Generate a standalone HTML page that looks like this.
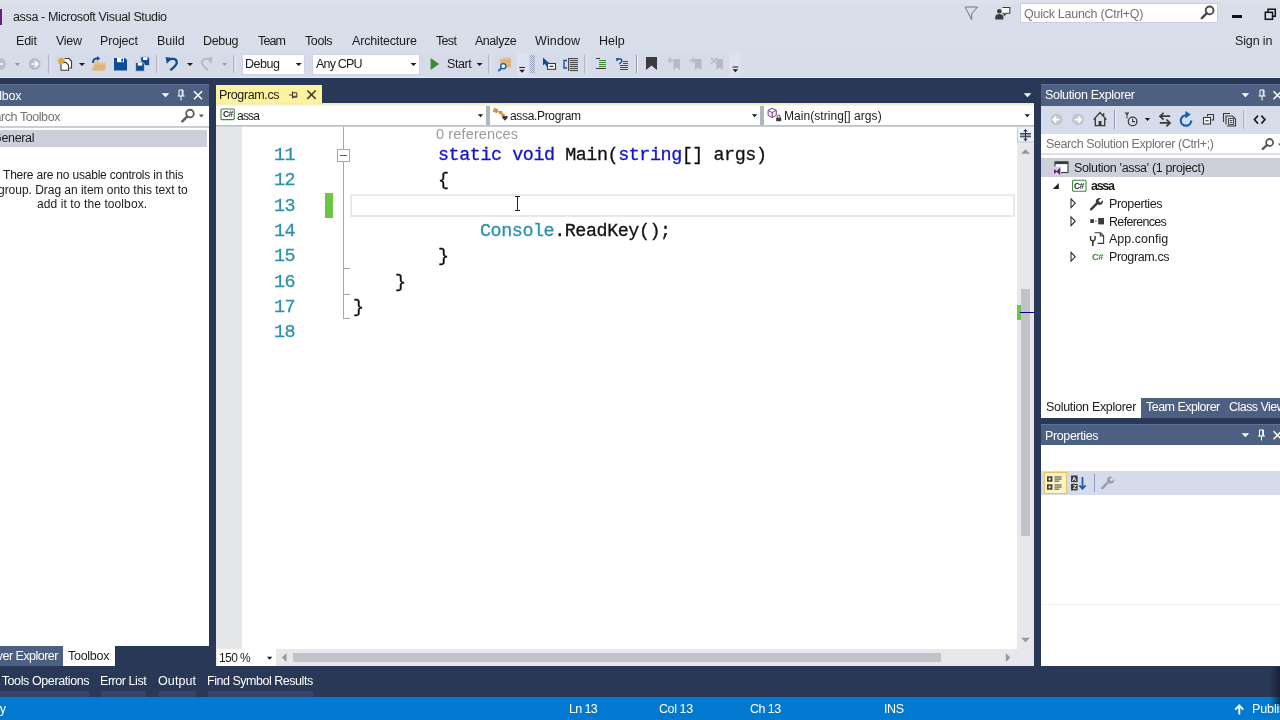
<!DOCTYPE html>
<html lang="en">
<head>
<meta charset="utf-8">
<title>assa - Microsoft Visual Studio</title>
<style>
*{box-sizing:border-box;margin:0;padding:0}
html,body{width:1280px;height:720px;overflow:hidden}
body{position:relative;background:#dbe0ec;font-family:"Liberation Sans",sans-serif;font-size:12px;color:#1b1b1b}
.a{position:absolute}
.t{position:absolute;white-space:nowrap;will-change:transform}
svg{position:absolute;overflow:visible}
</style>
</head>
<body>
<!-- title / menu / toolbar -->
<div class="a" style="left:0px;top:0px;width:1280px;height:78px;background:linear-gradient(#dde2ec 0,#d9dfea 6px,#d7dde9 100%);"></div>
<div class="a" style="left:0px;top:53px;width:517px;height:23px;background:#d5dbe8;"></div>
<div class="a" style="left:517px;top:53px;width:11px;height:23px;background:#dde2ec;"></div>
<div class="a" style="left:528px;top:53px;width:201px;height:23px;background:#d5dbe8;"></div>
<div class="a" style="left:729px;top:53px;width:11px;height:23px;background:#dde2ec;"></div>
<div class="a" style="left:0px;top:76.5px;width:1280px;height:1.5px;background:#e3e7f0;"></div>
<div class="a" style="left:0px;top:9px;width:2px;height:16px;background:#68217a;"></div>
<div class="t" id="t0" style="top:9.17px;font-size:12.5px;line-height:16px;color:#1b1b1b;letter-spacing:-0.358px;left:12.90px;">assa - Microsoft Visual Studio</div>
<div class="t" id="t1" style="top:32.67px;font-size:12.5px;line-height:16px;color:#1b1b1b;letter-spacing:-0.212px;left:16.40px;">Edit</div>
<div class="t" id="t2" style="top:32.67px;font-size:12.5px;line-height:16px;color:#1b1b1b;letter-spacing:-0.294px;left:55.90px;">View</div>
<div class="t" id="t3" style="top:32.67px;font-size:12.5px;line-height:16px;color:#1b1b1b;letter-spacing:-0.172px;left:100.40px;">Project</div>
<div class="t" id="t4" style="top:32.67px;font-size:12.5px;line-height:16px;color:#1b1b1b;letter-spacing:-0.020px;left:156.90px;">Build</div>
<div class="t" id="t5" style="top:32.67px;font-size:12.5px;line-height:16px;color:#1b1b1b;letter-spacing:-0.329px;left:203.40px;">Debug</div>
<div class="t" id="t6" style="top:32.67px;font-size:12.5px;line-height:16px;color:#1b1b1b;letter-spacing:-0.845px;left:258.40px;">Team</div>
<div class="t" id="t7" style="top:32.67px;font-size:12.5px;line-height:16px;color:#1b1b1b;letter-spacing:-0.399px;left:305.40px;">Tools</div>
<div class="t" id="t8" style="top:32.67px;font-size:12.5px;line-height:16px;color:#1b1b1b;letter-spacing:-0.167px;left:351.90px;">Architecture</div>
<div class="t" id="t9" style="top:32.67px;font-size:12.5px;line-height:16px;color:#1b1b1b;letter-spacing:-0.684px;left:436.40px;">Test</div>
<div class="t" id="t10" style="top:32.67px;font-size:12.5px;line-height:16px;color:#1b1b1b;letter-spacing:-0.467px;left:475.40px;">Analyze</div>
<div class="t" id="t11" style="top:32.67px;font-size:12.5px;line-height:16px;color:#1b1b1b;letter-spacing:0.121px;left:535.40px;">Window</div>
<div class="t" id="t12" style="top:32.67px;font-size:12.5px;line-height:16px;color:#1b1b1b;letter-spacing:-0.005px;left:598.90px;">Help</div>
<div class="t" id="t13" style="top:33.17px;font-size:12.5px;line-height:16px;color:#1b1b1b;letter-spacing:-0.146px;left:1235.40px;">Sign in</div>
<div class="a" style="left:1020px;top:3px;width:198px;height:20px;background:#fff;border:1px solid #c9cede"></div>
<div class="t" id="t14" style="top:5.67px;font-size:12.5px;line-height:16px;color:#737373;letter-spacing:-0.262px;left:1024.40px;">Quick Launch (Ctrl+Q)</div>
<div class="a" style="left:242px;top:54px;width:63px;height:21px;background:#fff;border:1px solid #cfd4e2"></div>
<div class="t" id="t15" style="top:55.57px;font-size:12.5px;line-height:16px;color:#1b1b1b;letter-spacing:-0.449px;left:245.40px;">Debug</div>
<div class="a" style="left:312px;top:54px;width:108px;height:21px;background:#fff;border:1px solid #cfd4e2"></div>
<div class="t" id="t16" style="top:55.57px;font-size:12.5px;line-height:16px;color:#1b1b1b;letter-spacing:-0.802px;left:315.80px;">Any CPU</div>
<div class="t" id="t17" style="top:55.57px;font-size:12.5px;line-height:16px;color:#1b1b1b;letter-spacing:-0.402px;left:447.20px;">Start</div>
<!-- dark frame -->
<div class="a" style="left:0px;top:78px;width:1280px;height:619px;background:#293856;"></div>
<!-- toolbox panel -->
<div class="a" style="left:0px;top:84px;width:209px;height:1px;background:#5f7194;"></div>
<div class="a" style="left:0px;top:85px;width:209px;height:21px;background:#4d6082;"></div>
<div class="t" id="t18" style="top:88.17px;font-size:12.5px;line-height:16px;color:#fff;letter-spacing:-0.271px;right:1258.67px;">Toolbox</div>
<div class="a" style="left:0px;top:106px;width:209px;height:540px;background:#fff;"></div>
<div class="a" style="left:0px;top:126px;width:209px;height:1.5px;background:#c9cdd8;"></div>
<div class="t" id="t19" style="top:108.67px;font-size:12.5px;line-height:16px;color:#737373;letter-spacing:-0.425px;right:1220.33px;">Search Toolbox</div>
<div class="a" style="left:0px;top:130px;width:207px;height:17px;background:#cdd0db;"></div>
<div class="t" id="t20" style="top:130.17px;font-size:12.5px;line-height:16px;color:#1b1b1b;letter-spacing:-0.325px;right:1245.73px;">General</div>
<div class="t" id="t21" style="top:167.04px;font-size:12px;line-height:16px;color:#1b1b1b;letter-spacing:-0.201px;left:3.40px;">There are no usable controls in this</div>
<div class="t" id="t22" style="top:181.84px;font-size:12px;line-height:16px;color:#1b1b1b;letter-spacing:-0.029px;left:-1.60px;">group. Drag an item onto this text to</div>
<div class="t" id="t23" style="top:196.34px;font-size:12px;line-height:16px;color:#1b1b1b;letter-spacing:0.096px;left:37.40px;">add it to the toolbox.</div>
<div class="a" style="left:0px;top:646px;width:63px;height:20px;background:#4d6082;"></div>
<div class="t" id="t24" style="top:648.17px;font-size:12.5px;line-height:16px;color:#fff;letter-spacing:-0.529px;right:1222.43px;">Server Explorer</div>
<div class="a" style="left:63px;top:646px;width:52px;height:20px;background:#fff;"></div>
<div class="t" id="t25" style="top:648.17px;font-size:12.5px;line-height:16px;color:#1b1b1b;letter-spacing:-0.271px;left:68.40px;">Toolbox</div>
<!-- document well -->
<div class="a" style="left:216px;top:84.5px;width:105.5px;height:19px;background:#fff29d;"></div>
<div class="t" id="t26" style="top:86.67px;font-size:12.5px;line-height:16px;color:#1b1b1b;letter-spacing:-0.371px;left:219.40px;">Program.cs</div>
<div class="a" style="left:216px;top:103px;width:818px;height:3px;background:linear-gradient(#f0e7ae,#fbf8e4);"></div>
<div class="a" style="left:216px;top:105.5px;width:818px;height:20px;background:#fff;"></div>
<div class="a" style="left:486.3px;top:105.5px;width:3.7px;height:20px;background:#b0b5c2;"></div>
<div class="a" style="left:760.3px;top:105.5px;width:3.7px;height:20px;background:#b0b5c2;"></div>
<div class="a" style="left:216px;top:124.7px;width:818px;height:2px;background:linear-gradient(#b6bac6,#d3d6df);"></div>
<div class="t" id="t27" style="top:107.94px;font-size:12px;line-height:16px;color:#1b1b1b;letter-spacing:-0.790px;left:237.40px;">assa</div>
<div class="t" id="t28" style="top:107.94px;font-size:12px;line-height:16px;color:#1b1b1b;letter-spacing:-0.333px;left:509.90px;">assa.Program</div>
<div class="t" id="t29" style="top:107.94px;font-size:12px;line-height:16px;color:#1b1b1b;letter-spacing:0.053px;left:783.90px;">Main(string[] args)</div>
<div class="a" style="left:216px;top:127px;width:818px;height:522px;background:#fff;"></div>
<div class="a" style="left:216px;top:127px;width:26px;height:522px;background:#e6e7e8;"></div>
<div class="a" style="left:350px;top:194px;width:665px;height:23px;background:#fff;border:2px solid #e9e9e9"></div>
<div class="a" style="left:325px;top:193px;width:8px;height:25px;background:#6cc644;"></div>
<div class="a" style="left:343px;top:127px;width:1px;height:192px;background:#a8a8a8;"></div>
<div class="a" style="left:343px;top:268px;width:7px;height:1px;background:#a8a8a8;"></div>
<div class="a" style="left:343px;top:293.5px;width:7px;height:1px;background:#a8a8a8;"></div>
<div class="a" style="left:343px;top:318px;width:7px;height:1px;background:#a8a8a8;"></div>
<div class="a" style="left:337px;top:149px;width:13px;height:13px;background:#fff;border:1px solid #a8a8a8"></div>
<div class="a" style="left:340px;top:155px;width:7px;height:1px;background:#555;"></div>
<div class="t" id="t30" style="top:124.98px;font-size:14.5px;line-height:19px;color:#9a9a9a;letter-spacing:0.133px;left:436.40px;">0 references</div>
<div class="t" style="left:437.50px;top:144.10px;font:18.4px/24px 'Liberation Mono',monospace;letter-spacing:-0.442px;-webkit-text-stroke:0.3px"><span style="color:#1212d2">static</span><span style="color:#111"> </span><span style="color:#1212d2">void</span><span style="color:#111"> Main(</span><span style="color:#1212d2">string</span><span style="color:#111">[] args)</span></div>
<div class="t" style="left:437.50px;top:169.43px;font:18.4px/24px 'Liberation Mono',monospace;letter-spacing:-0.442px;-webkit-text-stroke:0.3px"><span style="color:#111">{</span></div>
<div class="t" style="left:479.90px;top:220.09px;font:18.4px/24px 'Liberation Mono',monospace;letter-spacing:-0.442px;-webkit-text-stroke:0.3px"><span style="color:#2b91af">Console</span><span style="color:#111">.ReadKey();</span></div>
<div class="t" style="left:437.50px;top:245.42px;font:18.4px/24px 'Liberation Mono',monospace;letter-spacing:-0.442px;-webkit-text-stroke:0.3px"><span style="color:#111">}</span></div>
<div class="t" style="left:395.10px;top:270.75px;font:18.4px/24px 'Liberation Mono',monospace;letter-spacing:-0.442px;-webkit-text-stroke:0.3px"><span style="color:#111">}</span></div>
<div class="t" style="left:352.70px;top:296.08px;font:18.4px/24px 'Liberation Mono',monospace;letter-spacing:-0.442px;-webkit-text-stroke:0.3px"><span style="color:#111">}</span></div>
<div class="t" style="left:273.5px;top:144.10px;font:18.4px/24px 'Liberation Mono',monospace;letter-spacing:-0.5px;color:#2b91af;-webkit-text-stroke:0.3px #2b91af">11</div>
<div class="t" style="left:273.5px;top:169.43px;font:18.4px/24px 'Liberation Mono',monospace;letter-spacing:-0.5px;color:#2b91af;-webkit-text-stroke:0.3px #2b91af">12</div>
<div class="t" style="left:273.5px;top:194.76px;font:18.4px/24px 'Liberation Mono',monospace;letter-spacing:-0.5px;color:#2b91af;-webkit-text-stroke:0.3px #2b91af">13</div>
<div class="t" style="left:273.5px;top:220.09px;font:18.4px/24px 'Liberation Mono',monospace;letter-spacing:-0.5px;color:#2b91af;-webkit-text-stroke:0.3px #2b91af">14</div>
<div class="t" style="left:273.5px;top:245.42px;font:18.4px/24px 'Liberation Mono',monospace;letter-spacing:-0.5px;color:#2b91af;-webkit-text-stroke:0.3px #2b91af">15</div>
<div class="t" style="left:273.5px;top:270.75px;font:18.4px/24px 'Liberation Mono',monospace;letter-spacing:-0.5px;color:#2b91af;-webkit-text-stroke:0.3px #2b91af">16</div>
<div class="t" style="left:273.5px;top:296.08px;font:18.4px/24px 'Liberation Mono',monospace;letter-spacing:-0.5px;color:#2b91af;-webkit-text-stroke:0.3px #2b91af">17</div>
<div class="t" style="left:273.5px;top:321.41px;font:18.4px/24px 'Liberation Mono',monospace;letter-spacing:-0.5px;color:#2b91af;-webkit-text-stroke:0.3px #2b91af">18</div>
<div class="a" style="left:517px;top:197px;width:1px;height:13px;background:#222;"></div>
<div class="a" style="left:515px;top:196px;width:5px;height:1px;background:#222;"></div>
<div class="a" style="left:515px;top:210px;width:5px;height:1px;background:#222;"></div>
<div class="a" style="left:1017px;top:127px;width:17px;height:522px;background:#e8e8ec;"></div>
<div class="a" style="left:1021px;top:289px;width:9px;height:247px;background:#c2c3c9;"></div>
<div class="a" style="left:1017px;top:305px;width:4px;height:15px;background:#6cc644;"></div>
<div class="a" style="left:1020px;top:312px;width:14px;height:1px;background:#00008b;"></div>
<div class="a" style="left:216px;top:649px;width:818px;height:17px;background:#e8e8ec;"></div>
<div class="a" style="left:293px;top:653px;width:648px;height:9px;background:#c2c3c9;"></div>
<div class="a" style="left:217px;top:649px;width:59px;height:17px;background:#fff;"></div>
<div class="t" id="t31" style="top:650.04px;font-size:12px;line-height:16px;color:#1b1b1b;letter-spacing:-0.567px;left:219.40px;">150 %</div>
<!-- solution explorer -->
<div class="a" style="left:1041px;top:84px;width:239px;height:1px;background:#5f7194;"></div>
<div class="a" style="left:1041px;top:85px;width:239px;height:21px;background:#4d6082;"></div>
<div class="t" id="t32" style="top:87.37px;font-size:12.5px;line-height:16px;color:#fff;letter-spacing:-0.324px;left:1045.40px;">Solution Explorer</div>
<div class="a" style="left:1041px;top:106px;width:239px;height:28px;background:#d6dce9;"></div>
<div class="a" style="left:1041px;top:134px;width:239px;height:19px;background:#fff;"></div>
<div class="a" style="left:1041px;top:153px;width:239px;height:2px;background:#dce0ea;"></div>
<div class="t" id="t33" style="top:135.67px;font-size:12.5px;line-height:16px;color:#737373;letter-spacing:-0.387px;left:1046.10px;">Search Solution Explorer (Ctrl+;)</div>
<div class="a" style="left:1041px;top:155px;width:239px;height:243px;background:#fff;"></div>
<div class="a" style="left:1041px;top:158px;width:239px;height:19px;background:#cdd0db;"></div>
<div class="t" id="t34" style="top:160.27px;font-size:12.5px;line-height:16px;color:#1b1b1b;letter-spacing:-0.336px;left:1074.10px;">Solution 'assa' (1 project)</div>
<div class="t" id="t35" style="top:177.67px;font-size:12.5px;line-height:16px;color:#1b1b1b;letter-spacing:-1.278px;font-weight:bold;left:1091.40px;">assa</div>
<div class="t" id="t36" style="top:195.67px;font-size:12.5px;line-height:16px;color:#1b1b1b;letter-spacing:-0.378px;left:1109.40px;">Properties</div>
<div class="t" id="t37" style="top:213.67px;font-size:12.5px;line-height:16px;color:#1b1b1b;letter-spacing:-0.673px;left:1109.40px;">References</div>
<div class="t" id="t38" style="top:231.17px;font-size:12.5px;line-height:16px;color:#1b1b1b;letter-spacing:0.012px;left:1109.40px;">App.config</div>
<div class="t" id="t39" style="top:249.17px;font-size:12.5px;line-height:16px;color:#1b1b1b;letter-spacing:-0.371px;left:1109.40px;">Program.cs</div>
<div class="a" style="left:1041px;top:398px;width:100px;height:20px;background:#fff;"></div>
<div class="a" style="left:1141px;top:398px;width:139px;height:20px;background:#4d6082;"></div>
<div class="t" id="t40" style="top:399.17px;font-size:12.5px;line-height:16px;color:#1b1b1b;letter-spacing:-0.306px;left:1046.10px;">Solution Explorer</div>
<div class="t" id="t41" style="top:399.17px;font-size:12.5px;line-height:16px;color:#fff;letter-spacing:-0.530px;left:1146.40px;">Team Explorer</div>
<div class="t" id="t42" style="top:399.17px;font-size:12.5px;line-height:16px;color:#fff;letter-spacing:-0.540px;left:1229.40px;">Class View</div>
<!-- properties -->
<div class="a" style="left:1041px;top:424px;width:239px;height:1px;background:#5f7194;"></div>
<div class="a" style="left:1041px;top:425px;width:239px;height:21px;background:#4d6082;"></div>
<div class="t" id="t43" style="top:428.17px;font-size:12.5px;line-height:16px;color:#fff;letter-spacing:-0.378px;left:1045.40px;">Properties</div>
<div class="a" style="left:1041px;top:445px;width:239px;height:221px;background:#fff;"></div>
<div class="a" style="left:1041px;top:471px;width:239px;height:24px;background:#d5dbea;"></div>
<div class="a" style="left:1044px;top:472px;width:23px;height:22px;background:#fdf4bf;border:1px solid #e5c365"></div>
<div class="a" style="left:1094px;top:474px;width:1px;height:18px;background:#8e9bbc;"></div>
<div class="a" style="left:1041px;top:604px;width:239px;height:1px;background:#f1f1f1;"></div>
<!-- bottom tabs and status bar -->
<div class="a" style="left:0px;top:691px;width:89px;height:6px;background:#35456a;"></div>
<div class="a" style="left:101px;top:691px;width:45px;height:6px;background:#35456a;"></div>
<div class="a" style="left:159px;top:691px;width:37px;height:6px;background:#35456a;"></div>
<div class="a" style="left:208px;top:691px;width:104.5px;height:6px;background:#35456a;"></div>
<div class="t" id="t44" style="top:672.67px;font-size:12.5px;line-height:16px;color:#fff;letter-spacing:-0.393px;right:1190.79px;">Data Tools Operations</div>
<div class="t" id="t45" style="top:672.67px;font-size:12.5px;line-height:16px;color:#fff;letter-spacing:-0.450px;left:100.40px;">Error List</div>
<div class="t" id="t46" style="top:672.67px;font-size:12.5px;line-height:16px;color:#fff;letter-spacing:0.110px;left:158.40px;">Output</div>
<div class="t" id="t47" style="top:672.67px;font-size:12.5px;line-height:16px;color:#fff;letter-spacing:-0.470px;left:207.40px;">Find Symbol Results</div>
<div class="a" style="left:0px;top:697px;width:1280px;height:23px;background:#0279d0;"></div>
<div class="a" style="left:1270px;top:667px;width:10px;height:38px;background:linear-gradient(90deg,rgba(22,26,40,0),rgba(22,26,40,.75));"></div>
<div class="t" id="t48" style="top:701.17px;font-size:12.5px;line-height:16px;color:#fff;letter-spacing:-0.288px;right:1274.19px;">Ready</div>
<div class="t" id="t49" style="top:701.17px;font-size:12.5px;line-height:16px;color:#fff;letter-spacing:-0.616px;left:568.90px;">Ln 13</div>
<div class="t" id="t50" style="top:701.17px;font-size:12.5px;line-height:16px;color:#fff;letter-spacing:-0.408px;left:659.40px;">Col 13</div>
<div class="t" id="t51" style="top:701.17px;font-size:12.5px;line-height:16px;color:#fff;letter-spacing:-0.533px;left:750.40px;">Ch 13</div>
<div class="t" id="t52" style="top:701.17px;font-size:12.5px;line-height:16px;color:#fff;letter-spacing:-0.380px;left:884.40px;">INS</div>
<div class="t" id="t53" style="top:701.17px;font-size:12.5px;line-height:16px;color:#fff;letter-spacing:-0.115px;left:1252.40px;">Publish</div>
<!-- icons -->
<svg width="1280" height="720" viewBox="0 0 1280 720" style="left:0;top:0"><circle cx="0" cy="64" r="6" fill="#b9bdc8"/>
<path d="M3.2 64 H-2.8 M-0.2 61 L-3.2 64 L-0.2 67" fill="none" stroke="#fff" stroke-width="1.6"/>
<polygon points="15.0,63.0 20.0,63.0 17.5,66.0" fill="#9096a3"/>
<circle cx="34.6" cy="64" r="6" fill="#b9bdc8"/>
<path d="M31.400000000000002 64 H37.4 M34.800000000000004 61 L37.800000000000004 64 L34.800000000000004 67" fill="none" stroke="#fff" stroke-width="1.6"/>
<rect x="48.5" y="55" width="1" height="18" fill="#8f98ae"/><rect x="49.5" y="55" width="1" height="18" fill="#eef1f7"/>
<path d="M64.5 58.5 h4.5 l2.5 2.5 v7 h-2" fill="#fff" stroke="#3b3b3b" stroke-width="1.1"/>
<path d="M61 62.5 h5 l2.5 2.5 v5.3 h-7.5 z" fill="#fff" stroke="#3b3b3b" stroke-width="1.1"/>
<path d="M61.3 56.5 l0.9 2.3 2.3-1 -1 2.3 2.3 0.9 -2.3 0.9 1 2.3 -2.3-1 -0.9 2.3 -0.9-2.3 -2.3 1 1-2.3 -2.3-0.9 2.3-0.9 -1-2.3 2.3 1z" fill="#eaa23a"/>
<polygon points="79.0,63.0 85.0,63.0 82,66.0" fill="#1b1b1b"/>
<path d="M94 61 h5 l1 1.5 h6 v8 h-12z" fill="#e6c48a"/><path d="M91.5 70.5 l3-6 h11.5 l-3 6z" fill="#dcb67a"/>
<path d="M92.8 63 c0-3.2 2-4.6 5-4.6" fill="none" stroke="#0e4c96" stroke-width="1.7"/><polygon points="97,56 100.3,58.4 97,60.8" fill="#0e4c96"/>
<path d="M114 58 h11 l2 2 v10.5 h-13z" fill="#0e4c96"/><rect x="117" y="58" width="7" height="4.2" fill="#fff"/><rect x="121.3" y="58.6" width="1.7" height="3" fill="#0e4c96"/>
<path d="M140.8 56.8 h7.2 l1.6 1.6 v7.2 h-8.8z" fill="#0e4c96" stroke="#d5dbe8" stroke-width="0.8"/><rect x="143" y="57.2" width="4.4" height="2.8" fill="#fff"/>
<path d="M135.6 62.4 h7.2 l1.6 1.6 v7.2 h-8.8z" fill="#0e4c96" stroke="#d5dbe8" stroke-width="0.8"/><rect x="137.8" y="62.8" width="4.4" height="2.8" fill="#fff"/>
<rect x="156.5" y="55" width="1" height="18" fill="#8f98ae"/><rect x="157.5" y="55" width="1" height="18" fill="#eef1f7"/>
<path d="M168.5 60.2 C171 58 176.8 58.2 176.8 62.5 C176.8 65.5 173.5 67.5 170.3 70.2" fill="none" stroke="#0e4c96" stroke-width="2.3"/><polygon points="165.6,57 172.2,58 166.8,63.8" fill="#0e4c96"/>
<polygon points="187.0,63.0 193.0,63.0 190,66.0" fill="#1b1b1b"/>
<path d="M209.8 60.2 C207.3 58 201.8 58.2 201.8 62.5 C201.8 65.5 205 67.5 208 70.2" fill="none" stroke="#b6bac6" stroke-width="2"/><polygon points="212.6,57 206.2,58 211.5,63.8" fill="#b6bac6"/>
<polygon points="222.1,63.0 227.1,63.0 224.6,66.0" fill="#9aa0ae"/>
<rect x="233.5" y="55" width="1" height="18" fill="#8f98ae"/><rect x="234.5" y="55" width="1" height="18" fill="#eef1f7"/>
<polygon points="295.7,63.0 301.7,63.0 298.7,66.0" fill="#1b1b1b"/>
<polygon points="410.5,63.0 416.5,63.0 413.5,66.0" fill="#1b1b1b"/>
<polygon points="430.6,58 439.2,64 430.6,70" fill="#388a34"/>
<polygon points="476.6,63.0 482.6,63.0 479.6,66.0" fill="#1b1b1b"/>
<rect x="488.5" y="55" width="1" height="18" fill="#8f98ae"/><rect x="489.5" y="55" width="1" height="18" fill="#eef1f7"/>
<path d="M503 57.5 h8 v3 h-8z" fill="#e6c48a"/><rect x="500" y="59.3" width="11" height="8.2" fill="#dcb67a"/>
<circle cx="503.3" cy="66.2" r="2.6" fill="#eef3fb" stroke="#1b5fb0" stroke-width="1.4"/><line x1="501.4" y1="68.2" x2="498.2" y2="71" stroke="#1b5fb0" stroke-width="1.8"/>
<rect x="519.3" y="67" width="5.6" height="1" fill="#1b1b1b"/>
<polygon points="519.3000000000001,69.8 524.9,69.8 522.1,72.8" fill="#1b1b1b"/>
<defs><pattern id="grip" width="2" height="2" patternUnits="userSpaceOnUse"><rect width="1" height="1" fill="#98a1b8"/><rect x="1" y="1" width="1" height="1" fill="#98a1b8"/></pattern></defs><rect x="530" y="55" width="5" height="18" fill="url(#grip)"/>
<rect x="547.5" y="63.5" width="8" height="5.8" fill="#fff" stroke="#3b3b3b" stroke-width="1.1"/><rect x="549.5" y="65.7" width="4" height="1.3" fill="#3b3b3b"/>
<polygon points="543,57.5 543,65.5 545,63.8 546.4,66.6 547.8,65.9 546.5,63.2 549,63" fill="#0e4c96"/>
<path d="M567 60.5 h-3 v7.5 h3" fill="none" stroke="#0e4c96" stroke-width="1.3"/>
<rect x="568" y="58.0" width="10" height="1.1" fill="#4a4a4a"/>
<rect x="570" y="60.0" width="8" height="1.1" fill="#4a4a4a"/>
<rect x="570" y="62.0" width="8" height="1.1" fill="#4a4a4a"/>
<rect x="570" y="64.0" width="8" height="1.1" fill="#4a4a4a"/>
<rect x="570" y="66.0" width="8" height="1.1" fill="#4a4a4a"/>
<rect x="570" y="68.0" width="8" height="1.1" fill="#4a4a4a"/>
<rect x="570" y="70.0" width="8" height="1.1" fill="#4a4a4a"/>
<rect x="568" y="58" width="1.2" height="13" fill="#4a4a4a"/>
<rect x="584.5" y="55" width="1" height="18" fill="#8f98ae"/><rect x="585.5" y="55" width="1" height="18" fill="#eef1f7"/>
<rect x="599" y="60" width="7" height="1" fill="#388a34"/>
<rect x="599" y="62" width="7" height="1" fill="#388a34"/>
<rect x="599" y="64" width="7" height="1" fill="#388a34"/>
<rect x="599" y="66" width="7" height="1" fill="#388a34"/>
<rect x="596" y="58" width="4" height="1" fill="#3b3b3b"/><rect x="596" y="68" width="10" height="1" fill="#3b3b3b"/>
<path d="M618 59.6 C619.5 58.4 621.8 58.8 621.8 60.8 C621.8 62.2 620.4 63 619.4 64" fill="none" stroke="#0e4c96" stroke-width="1.4"/><polygon points="616,58 619.6,58.4 616.6,61.6" fill="#0e4c96"/>
<rect x="623" y="61" width="5" height="1" fill="#4a4a4a"/>
<rect x="623" y="63" width="5" height="1" fill="#4a4a4a"/>
<rect x="620" y="65" width="8" height="1" fill="#4a4a4a"/>
<rect x="620" y="67" width="8" height="1" fill="#4a4a4a"/>
<rect x="620" y="69" width="8" height="1" fill="#4a4a4a"/>
<rect x="636.0" y="55" width="1" height="18" fill="#8f98ae"/><rect x="637.0" y="55" width="1" height="18" fill="#eef1f7"/>
<polygon points="646,57 657,57 657,70 651.5,65.6 646,70" fill="#3b3b3b"/>
<polygon points="673.5,59 680,59 680,70.3 676.75,67.6 673.5,70.3" fill="#b6bac6"/>
<polygon points="695.0,59 701.5,59 701.5,70.3 698.25,67.6 695.0,70.3" fill="#b6bac6"/>
<polygon points="716.5,59 723,59 723,70.3 719.75,67.6 716.5,70.3" fill="#b6bac6"/>
<path d="M674 60.5 h-5.5 m2.6-2.6 l-2.6 2.6 2.6 2.6" fill="none" stroke="#b6bac6" stroke-width="1.4"/>
<path d="M689.5 60.5 h5.5 m-2.6-2.6 l2.6 2.6 -2.6 2.6" fill="none" stroke="#b6bac6" stroke-width="1.4"/>
<path d="M711 57.8 l6 6 m0-6 l-6 6" fill="none" stroke="#b6bac6" stroke-width="1.4"/>
<rect x="732.6" y="66.5" width="5.6" height="1" fill="#1b1b1b"/>
<polygon points="732.6,69.3 738.1999999999999,69.3 735.4,72.3" fill="#1b1b1b"/>
<path d="M965 7 H977.5 L971.6 14 V19.6 Z" fill="none" stroke="#6f7482" stroke-width="1" stroke-linejoin="round"/>
<circle cx="999.3" cy="11.3" r="2.3" fill="#3b3b3b"/><path d="M995.3 19.5 v-2.2 c0-2.4 1.6-3.4 4-3.4 s4 1 4 3.4 v2.2z" fill="#3b3b3b"/>
<path d="M1002.5 7.5 h7.3 v5.8 h-3.6 l-2 2 v-2 h-1.7" fill="#fff" stroke="#3b3b3b" stroke-width="1.1"/>
<circle cx="1209.6" cy="10.4" r="3.9" fill="none" stroke="#4a4a4a" stroke-width="1.9"/><line x1="1206.9" y1="13.1" x2="1201.8" y2="18.2" stroke="#4a4a4a" stroke-width="2.5" stroke-linecap="round"/>
<rect x="1232" y="15" width="10" height="3" fill="#111"/>
<path d="M1268 12 V9.3 H1275.3 V16.3 H1272.8" fill="none" stroke="#111" stroke-width="1.5"/><rect x="1265.3" y="12.3" width="7.2" height="7" fill="none" stroke="#111" stroke-width="1.5"/>
<polygon points="161.75,93.3 169.25,93.3 165.5,97.3" fill="#fff"/>
<path d="M179 96.0 V90.0 H183 V96.0 M182.2 90.0 V96.0 M177.5 96.0 H184.5 M181 96.0 V100.5" fill="none" stroke="#fff" stroke-width="1"/>
<path d="M194 91.3 L202 99.3 M202 91.3 L194 99.3" stroke="#fff" stroke-width="1.5" fill="none"/>
<polygon points="1241.65,93.3 1249.15,93.3 1245.4,97.3" fill="#fff"/>
<path d="M1260 96.0 V90.0 H1264 V96.0 M1263.2 90.0 V96.0 M1258.5 96.0 H1265.5 M1262 96.0 V100.5" fill="none" stroke="#fff" stroke-width="1"/>
<path d="M1273.5 91.3 L1281.5 99.3 M1281.5 91.3 L1273.5 99.3" stroke="#fff" stroke-width="1.5" fill="none"/>
<polygon points="1241.65,433.3 1249.15,433.3 1245.4,437.3" fill="#fff"/>
<path d="M1259.5 436.0 V430.0 H1263.5 V436.0 M1262.7 430.0 V436.0 M1258.0 436.0 H1265.0 M1261.5 436.0 V440.5" fill="none" stroke="#fff" stroke-width="1"/>
<path d="M1273.5 431.3 L1281.5 439.3 M1281.5 431.3 L1273.5 439.3" stroke="#fff" stroke-width="1.5" fill="none"/>
<polygon points="1023.75,93.3 1031.25,93.3 1027.5,97.3" fill="#fff"/>
<circle cx="190.0" cy="113.6" r="3.8" fill="none" stroke="#5e5e5e" stroke-width="1.9"/><line x1="187.3" y1="116.3" x2="182.3" y2="121.4" stroke="#5e5e5e" stroke-width="2.5" stroke-linecap="round"/>
<polygon points="198.8,114.5 203.8,114.5 201.3,117.5" fill="#555"/>
<path d="M289 95 H292.5 M292.5 91.5 V98.5 M292.5 92.8 H296.8 V97.2 H292.5 M292.5 96.3 H296.8" fill="none" stroke="#3a3a3a" stroke-width="1"/>
<path d="M307.3 90.5 L315.7 98.9 M315.7 90.5 L307.3 98.9" stroke="#3a3a3a" stroke-width="1.5" fill="none"/>
<polygon points="477.8,114.2 483.2,114.2 480.5,117.2" fill="#1b1b1b"/>
<polygon points="751.9,114.2 757.3000000000001,114.2 754.6,117.2" fill="#1b1b1b"/>
<polygon points="1024.6,114.2 1030.0,114.2 1027.3,117.2" fill="#1b1b1b"/>
<rect x="221" y="109" width="13.2" height="10.6" rx="1" fill="#fff" stroke="#388a34" stroke-width="1.1"/>
<path d="M496.5 111 L500 112.5 L503 114.5" stroke="#c58a3b" stroke-width="1.2" fill="none"/><rect x="493.5" y="108.5" width="4.6" height="4.2" fill="#d9953d" transform="rotate(20 496 110)"/><rect x="499" y="111" width="3.4" height="3.2" fill="#d9953d"/><rect x="501.5" y="113.6" width="3.2" height="3" fill="#d9953d"/>
<path d="M502.3 116 h5.2 v2 l-2.6 2.8 -2.6-2.8z" fill="#3b3b3b"/>
<path d="M772.2 108.2 l4.1 2.1 v5 l-4.1 2.4 -4.1-2.4 v-5z M768.1 110.3 l4.1 2.3 4.1-2.3 M772.2 112.6 v5.1" fill="#f8f2fb" stroke="#73408d" stroke-width="1" stroke-linejoin="round"/>
<rect x="776.2" y="117.6" width="5" height="3.6" fill="#3b3b3b"/><path d="M777.3 117.6 v-1 a1.4 1.4 0 0 1 2.8 0 v1" fill="none" stroke="#3b3b3b" stroke-width="1"/>
<rect x="1017.5" y="127" width="16.5" height="15" fill="#eef1f8"/><path d="M1017.5 127 V142 H1034" fill="none" stroke="#c3c9d9" stroke-width="1"/>
<rect x="1020" y="133.6" width="11" height="3.2" fill="#a4a9b8"/><path d="M1020 133.6 H1031 M1020 136.8 H1031 M1025.5 130 V140.4" fill="none" stroke="#2a3350" stroke-width="1"/><polygon points="1023.3,131.6 1025.5,128.8 1027.7,131.6" fill="#2a3350"/><polygon points="1023.3,138.8 1025.5,141.6 1027.7,138.8" fill="#2a3350"/>
<polygon points="1021,153.8 1030,153.8 1025.5,149.3" fill="#9698a0"/><polygon points="1021,637.8 1030,637.8 1025.5,642.3" fill="#9698a0"/>
<polygon points="286.5,653 286.5,662 282,657.5" fill="#9698a0"/><polygon points="1005.8,653 1005.8,662 1010.3,657.5" fill="#9698a0"/>
<polygon points="266.90000000000003,656.7 272.3,656.7 269.6,659.7" fill="#1b1b1b"/>
<circle cx="1056.5" cy="119.6" r="6" fill="#c2c6cf"/>
<path d="M1059.7 119.6 H1053.7 M1056.3 116.6 L1053.3 119.6 L1056.3 122.6" fill="none" stroke="#fff" stroke-width="1.6"/>
<circle cx="1078" cy="119.6" r="6" fill="#c2c6cf"/>
<path d="M1074.8 119.6 H1080.8 M1078.2 116.6 L1081.2 119.6 L1078.2 122.6" fill="none" stroke="#fff" stroke-width="1.6"/>
<path d="M1093.6 119.6 L1100 112.6 L1106.4 119.6 M1095.3 118.5 V125.6 H1104.7 V118.5 M1103.6 113.2 V116" fill="none" stroke="#3b3b3b" stroke-width="1.4"/><rect x="1098.6" y="121" width="2.9" height="4.6" fill="#3b3b3b"/>
<rect x="1114.0" y="110" width="1" height="19" fill="#8f98ae"/><rect x="1115.0" y="110" width="1" height="19" fill="#eef1f7"/>
<circle cx="1132.6" cy="121.4" r="4.3" fill="none" stroke="#3b3b3b" stroke-width="1.3"/><path d="M1132.6 118.8 V121.6 H1135" fill="none" stroke="#3b3b3b" stroke-width="1.1"/><polygon points="1124.6,112.6 1129.4,112.6 1127,115.6" fill="#3b3b3b"/><path d="M1127 115 V118.5" stroke="#3b3b3b" stroke-width="1"/>
<polygon points="1144.8,118.1 1150.2,118.1 1147.5,121.1" fill="#1b1b1b"/>
<path d="M1170.2 116.2 H1160 M1163.6 112.8 L1160 116.2 L1163.6 119.6 M1159.8 122.9 H1170 M1166.4 119.5 L1170 122.9 L1166.4 126.3" fill="none" stroke="#3b3b3b" stroke-width="1.7"/>
<path d="M1186 115.3 A5.2 5.2 0 1 0 1191.2 120.5" fill="none" stroke="#1262bc" stroke-width="2.2"/><polygon points="1185.4,111 1190.8,114.6 1185.4,118.4" fill="#1262bc"/>
<path d="M1207.5 116.5 V114.5 H1213.5 V120 H1211.5" fill="none" stroke="#3b3b3b" stroke-width="1.1"/><rect x="1203.5" y="117.5" width="7" height="6.5" fill="#fff" stroke="#3b3b3b" stroke-width="1.1"/><rect x="1205.3" y="120.2" width="3.4" height="1.1" fill="#3b3b3b"/>
<path d="M1223.5 122 V113.5 H1230 M1226 124.5 V116 H1232.5 L1235.5 119 V126 H1227" fill="none" stroke="#3b3b3b" stroke-width="1.1"/><path d="M1228.5 118.5 H1233.5 V124.5 H1228.5z M1229.8 120.5 h2.5 M1229.8 122.5 h2.5" fill="none" stroke="#3b3b3b" stroke-width="0.9"/>
<rect x="1243.5" y="110" width="1" height="19" fill="#8f98ae"/><rect x="1244.5" y="110" width="1" height="19" fill="#eef1f7"/>
<path d="M1258 115.6 L1254.4 119.6 L1258 123.6 M1261.4 115.6 L1265 119.6 L1261.4 123.6" fill="none" stroke="#1b1b1b" stroke-width="1.6"/>
<circle cx="1269.6" cy="142.5" r="3.5" fill="none" stroke="#5a5a5a" stroke-width="1.8"/><line x1="1267.2" y1="144.9" x2="1262.8" y2="148.9" stroke="#5a5a5a" stroke-width="2.4" stroke-linecap="round"/>
<polygon points="1278.0,143.5 1283.0,143.5 1280.5,146.5" fill="#555"/>
<rect x="1055" y="162" width="13" height="10.5" fill="#fff" stroke="#3b3b3b" stroke-width="1.1"/><rect x="1055" y="161.5" width="13" height="2.6" fill="#3b3b3b"/><rect x="1052.6" y="166.6" width="8.4" height="8" fill="#d2d4de"/>
<path d="M1054 169 L1057.2 171.5 L1054 174 Z M1060.2 167.6 V175 L1056.2 171.4 Z" fill="#68217a"/>
<polygon points="1058.8,183 1058.8,189 1052.8,189" fill="#222"/>
<rect x="1072.6" y="180.3" width="13.4" height="11" rx="1" fill="#fff" stroke="#388a34" stroke-width="1.1"/>
<path d="M1071 198.9 V207.70000000000002 L1075.2 203.3 Z" fill="#fff" stroke="#2a2a2a" stroke-width="1.05"/>
<path d="M1071 216.79999999999998 V225.6 L1075.2 221.2 Z" fill="#fff" stroke="#2a2a2a" stroke-width="1.05"/>
<path d="M1071 252.4 V261.2 L1075.2 256.8 Z" fill="#fff" stroke="#2a2a2a" stroke-width="1.05"/>
<g transform="translate(1090.3 197.6) scale(1)"><path d="M0.8 11.8 L6.2 6.2" stroke="#3b3b3b" stroke-width="2.4" stroke-linecap="round"/><path d="M12.6 2.6 L10 5.2 L8 3.2 L10.6 0.6 C8.6 -0.2 6.2 0.6 5.6 2.8 C5.2 4.4 5.8 5.4 6.4 6.2 C7.2 7 8.6 7.6 10 7.2 C12.2 6.6 13.2 4.6 12.6 2.6Z" fill="#3b3b3b"/></g>
<rect x="1090.3" y="219.2" width="3.6" height="3.8" fill="#3b3b3b"/><rect x="1095.2" y="220.6" width="1.4" height="1.2" fill="#3b3b3b"/><rect x="1098.2" y="218" width="5.8" height="6.4" fill="#3b3b3b"/>
<path d="M1094.6 232.8 H1100.5 L1103.6 235.8 V243.4 H1097.5 M1100.3 233 V236 H1103.4" fill="#fff" stroke="#3b3b3b" stroke-width="1.1"/>
<path d="M1092.8 240.4 V246" stroke="#3b3b3b" stroke-width="1.7"/><path d="M1090.5 236 V238.6 a2.3 2.3 0 0 0 4.6 0 V236" fill="none" stroke="#3b3b3b" stroke-width="1.5"/>
<rect x="1047" y="476.3" width="5.4" height="5.4" fill="#3b3b3b"/><path d="M1048.2 479.0 h3 M1049.7 477.5 v3" stroke="#fff" stroke-width="0.9"/>
<rect x="1054.4" y="476.40000000000003" width="7.2" height="1.1" fill="#555"/>
<rect x="1054.4" y="478.5" width="7.2" height="1.1" fill="#555"/>
<rect x="1054.4" y="480.6" width="5" height="1.1" fill="#555"/>
<rect x="1047" y="484.3" width="5.4" height="5.4" fill="#3b3b3b"/><path d="M1048.2 487.0 h3 M1049.7 485.5 v3" stroke="#fff" stroke-width="0.9"/>
<rect x="1054.4" y="484.40000000000003" width="7.2" height="1.1" fill="#555"/>
<rect x="1054.4" y="486.5" width="7.2" height="1.1" fill="#555"/>
<rect x="1054.4" y="488.6" width="5" height="1.1" fill="#555"/>
<rect x="1071" y="475.5" width="6.6" height="6.6" fill="#3b3b3b"/><rect x="1071" y="483.8" width="6.6" height="6.6" fill="#3b3b3b"/>
<path d="M1082.5 477 V488.6 M1079.4 485.4 L1082.5 488.8 L1085.6 485.4" fill="none" stroke="#1256b0" stroke-width="1.7"/>
<g transform="translate(1101.5 476.3) scale(1.0)"><path d="M0.8 11.8 L6.2 6.2" stroke="#9c9ea6" stroke-width="2.4" stroke-linecap="round"/><path d="M12.6 2.6 L10 5.2 L8 3.2 L10.6 0.6 C8.6 -0.2 6.2 0.6 5.6 2.8 C5.2 4.4 5.8 5.4 6.4 6.2 C7.2 7 8.6 7.6 10 7.2 C12.2 6.6 13.2 4.6 12.6 2.6Z" fill="#9c9ea6"/></g>
<path d="M1239.3 714.5 V705.5 M1235.3 709.6 L1239.3 705.4 L1243.3 709.6" fill="none" stroke="#fff" stroke-width="1.9"/></svg>
<div class="t" style="left:222.6px;top:110.4px;font-size:8.5px;line-height:8.5px;color:#2a2a2a;font-weight:bold;letter-spacing:-0.6px">C#</div>
<div class="t" style="left:1074.2px;top:181.6px;font-size:8.5px;line-height:8.5px;color:#2a2a2a;font-weight:bold;letter-spacing:-0.6px">C#</div>
<div class="t" style="left:1091.6px;top:251.6px;font-size:9.5px;line-height:9.5px;color:#388a34;font-weight:bold;letter-spacing:-0.5px">C#</div>
<div class="t" style="left:1072.4px;top:475.9px;font-size:6px;line-height:6px;color:#fff;font-weight:bold;letter-spacing:0px">A</div>
<div class="t" style="left:1072.6px;top:484.2px;font-size:6px;line-height:6px;color:#fff;font-weight:bold;letter-spacing:0px">Z</div>
</body>
</html>
